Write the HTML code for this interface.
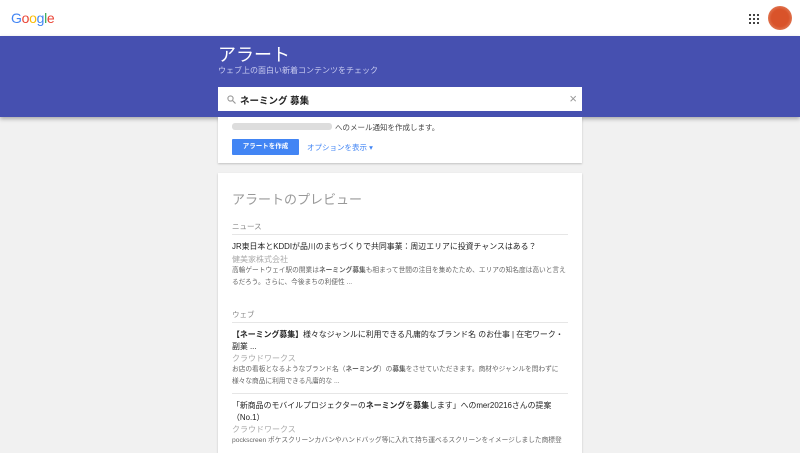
<!DOCTYPE html>
<html><head><meta charset="utf-8"><style>
*{margin:0;padding:0;box-sizing:border-box}
body{width:800px;height:443px;overflow:hidden;background:#f1f1f1;font-family:"Liberation Sans","Noto Sans CJK JP",sans-serif;position:relative}
.top{position:absolute;left:0;top:0;width:800px;height:36px;background:#fff}
.logo{position:absolute;left:11px;top:10px;font-size:14px;letter-spacing:-0.3px}
.band{position:absolute;left:0;top:36px;width:800px;height:81px;background:#4650b0;box-shadow:0 2px 4px rgba(0,0,0,.3)}
.t1{position:absolute;left:218px;top:41px;color:#fff;font-size:18px}
.t2{position:absolute;left:218px;top:65px;color:#c8cbf0;font-size:8px}
.search{position:absolute;left:218px;top:87px;width:364px;height:24px;background:#fff;font-size:9.5px;font-weight:bold;color:#222;padding:6px 0 0 22px}
.card1{position:absolute;left:218px;top:117px;width:364px;height:46px;background:#fff;box-shadow:0 1px 2px rgba(0,0,0,.2)}
.card2{position:absolute;left:218px;top:173px;width:364px;height:280px;background:#fff;box-shadow:0 1px 2px rgba(0,0,0,.2)}
.btn{position:absolute;left:14px;top:22px;width:67px;height:16px;background:#4285f4;color:#fff;font-size:6.5px;font-weight:bold;text-align:center;line-height:16px;border-radius:1px}
.s{font-size:7.5px;color:#888}
.h{font-size:7.9px;color:#222;line-height:12px}
.src{font-size:8px;color:#aaa}
.d{font-size:6.7px;color:#666;line-height:12px}
.ab{position:absolute;left:14px;width:336px}
.hr{position:absolute;left:14px;width:336px;border-top:1px solid #e6e6e6}
</style></head><body>
<div class="top">
<div class="logo"><span style="color:#4285f4">G</span><span style="color:#ea4335">o</span><span style="color:#fbbc05">o</span><span style="color:#4285f4">g</span><span style="color:#34a853">l</span><span style="color:#ea4335">e</span></div>
<svg style="position:absolute;left:749px;top:14px" width="10" height="10"><g fill="#444"><rect x="0" y="0" width="2" height="2"/><rect x="4" y="0" width="2" height="2"/><rect x="8" y="0" width="2" height="2"/><rect x="0" y="4" width="2" height="2"/><rect x="4" y="4" width="2" height="2"/><rect x="8" y="4" width="2" height="2"/><rect x="0" y="8" width="2" height="2"/><rect x="4" y="8" width="2" height="2"/><rect x="8" y="8" width="2" height="2"/></g></svg>
<div style="position:absolute;left:768px;top:6px;width:24px;height:24px;border-radius:50%;background:radial-gradient(#d9532a 50%,#e8a080 100%)"></div>
</div>
<div class="band"></div>
<div class="t1">アラート</div>
<div class="t2">ウェブ上の面白い新着コンテンツをチェック</div>
<div class="card1">
<div style="position:absolute;left:14px;top:6px;width:100px;height:7px;background:#ddd;border-radius:3px"></div>
<div style="position:absolute;left:117px;top:5px;font-size:7.5px;color:#444">へのメール通知を作成します。</div>
<div class="btn">アラートを作成</div>
<div style="position:absolute;left:89px;top:25px;font-size:7.5px;color:#4285f4">オプションを表示 ▾</div>
</div>
<div class="search"><svg style="position:absolute;left:9px;top:8px" width="9" height="9"><circle cx="3.5" cy="3.5" r="2.6" fill="none" stroke="#999" stroke-width="1.1"/><path d="M5.5 5.5L8.5 8.5" stroke="#999" stroke-width="1.2"/></svg>ネーミング 募集<span style="position:absolute;right:5px;top:4px;color:#999;font-weight:normal;font-size:13px">×</span></div>
<div class="card2">
<div style="position:absolute;left:14px;top:16px;font-size:13px;color:#999">アラートのプレビュー</div>
<div class="ab s" style="top:48px">ニュース</div>
<div class="hr" style="top:61px"></div>
<div class="ab h" style="top:68px">JR東日本とKDDIが品川のまちづくりで共同事業：周辺エリアに投資チャンスはある？</div>
<div class="ab src" style="top:81px">健美家株式会社</div>
<div class="ab d" style="top:92px">高輪ゲートウェイ駅の開業は<b>ネーミング募集</b>も相まって世間の注目を集めたため、エリアの知名度は高いと言えるだろう。さらに、今後まちの利便性 ...</div>
<div class="ab s" style="top:136px">ウェブ</div>
<div class="hr" style="top:149px"></div>
<div class="ab h" style="top:156px;white-space:nowrap"><b>【ネーミング募集】</b>様々なジャンルに利用できる凡庸的なブランド名 のお仕事 | 在宅ワーク・<br>副業 ...</div>
<div class="ab src" style="top:180px">クラウドワークス</div>
<div class="ab d" style="top:191px">お店の看板となるようなブランド名（<b>ネーミング</b>）の<b>募集</b>をさせていただきます。商材やジャンルを問わずに様々な商品に利用できる凡庸的な ...</div>
<div class="hr" style="top:220px"></div>
<div class="ab h" style="top:227px;white-space:nowrap">「新商品のモバイルプロジェクターの<b>ネーミング</b>を<b>募集</b>します」へのmer20216さんの提案<br>（No.1）</div>
<div class="ab src" style="top:251px">クラウドワークス</div>
<div class="ab d" style="top:262px;white-space:nowrap;overflow:hidden">pockscreen ポケスクリーンカバンやハンドバッグ等に入れて持ち運べるスクリーンをイメージしました商標登</div>
</div>
</body></html>
